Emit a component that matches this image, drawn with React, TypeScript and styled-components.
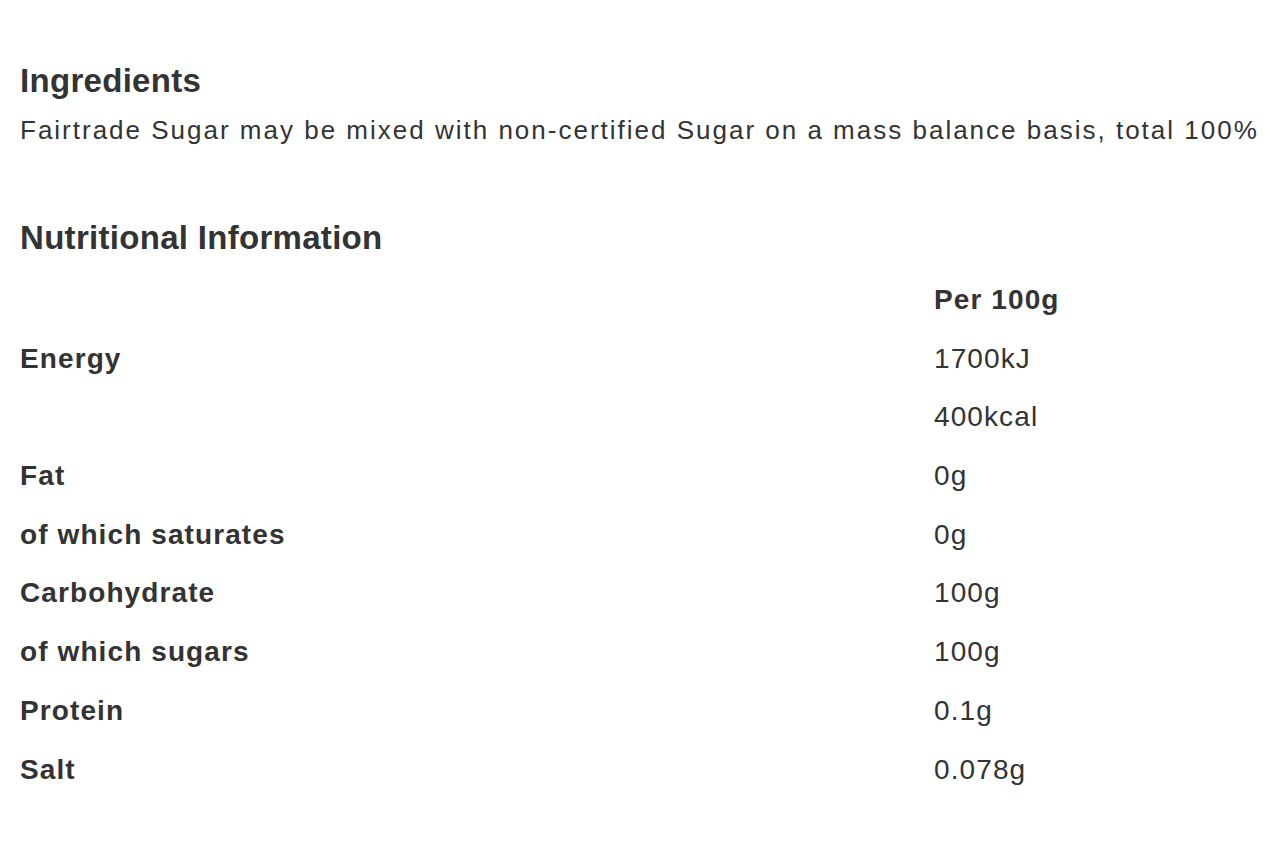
import styled, { createGlobalStyle } from 'styled-components';

const GlobalStyle = createGlobalStyle`
  html, body {
    margin: 0;
    padding: 0;
    background: #ffffff;
  }
  body {
    font-family: "Liberation Sans", Arial, sans-serif;
    color: #333333;
  }
`;

type Row = { label: string; value: string };

const rows: Row[] = [
  { label: 'Energy', value: '1700kJ' },
  { label: '', value: '400kcal' },
  { label: 'Fat', value: '0g' },
  { label: 'of which saturates', value: '0g' },
  { label: 'Carbohydrate', value: '100g' },
  { label: 'of which sugars', value: '100g' },
  { label: 'Protein', value: '0.1g' },
  { label: 'Salt', value: '0.078g' },
];

function App() {
  return (
    <>
      <GlobalStyle />
      <Page>
        <Section>
          <Heading>Ingredients</Heading>
          <Text>
            Fairtrade Sugar may be mixed with non-certified Sugar on a mass balance basis, total 100%
          </Text>
        </Section>

        <Section $gap={72}>
          <Heading>Nutritional Information</Heading>
          <Table>
            <Cell />
            <Cell $bold>Per 100g</Cell>
            {rows.map((r, i) => (
              <Line key={i}>
                <Cell $bold>{r.label}</Cell>
                <Cell>{r.value}</Cell>
              </Line>
            ))}
          </Table>
        </Section>
      </Page>
    </>
  );
}

export default App;

const Page = styled.div`
  padding: 61px 20px 40px 20px;
`;

const Section = styled.section<{ $gap?: number }>`
  margin-top: ${(p) => p.$gap ?? 0}px;
`;

const Heading = styled.h2`
  margin: 0;
  font-size: 33px;
  line-height: 40px;
  font-weight: 700;
  letter-spacing: 0.3px;
  color: #333333;
`;

const Text = styled.p`
  margin: 13px 0 0 0;
  font-size: 26px;
  line-height: 32px;
  letter-spacing: 2px;
  white-space: nowrap;
`;

const Table = styled.div`
  margin-top: 13px;
  display: grid;
  grid-template-columns: 914px auto;
`;

const Line = styled.div`
  display: contents;
`;

const Cell = styled.div<{ $bold?: boolean }>`
  font-size: 28px;
  line-height: 58.7px;
  height: 58.7px;
  letter-spacing: 1.1px;
  font-weight: ${(p) => (p.$bold ? 700 : 400)};
  white-space: nowrap;
`;
